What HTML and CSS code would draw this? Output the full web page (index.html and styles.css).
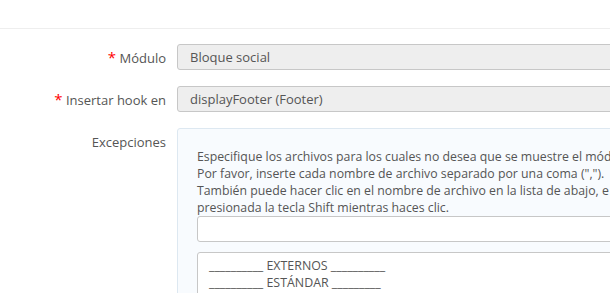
FILE: index.html
```html
<!DOCTYPE html>
<html lang="es">
<head>
  <meta charset="UTF-8" />
  <title>Transplantar un módulo</title>
  <link rel="stylesheet" href="styles.css">
</head>
<body>
  <div class="panel">
    <div class="panel-body">
      <div class="form-group">
        <label class="control-label"><span class="required">*</span> Módulo</label>
        <div class="field">
          <div class="form-control readonly">Bloque social</div>
        </div>
      </div>
      <div class="form-group">
        <label class="control-label"><span class="required">*</span> Insertar hook en</label>
        <div class="field">
          <div class="form-control readonly">displayFooter (Footer)</div>
        </div>
      </div>
      <div class="form-group top">
        <label class="control-label">Excepciones</label>
        <div class="field">
          <div class="well">
            <p class="help">Especifique los archivos para los cuales no desea que se muestre el módulo.<br>
            Por favor, inserte cada nombre de archivo separado por una coma (",").<br>
            También puede hacer clic en el nombre de archivo en la lista de abajo, e incluso hacer una selección múltiple manteniendo<br>
            presionada la tecla Shift mientras haces clic.</p>
            <input type="text" class="form-control input" value="">
            <div class="file-list">
              <div class="opt">__________ EXTERNOS __________</div>
              <div class="opt">__________ ESTÁNDAR _________</div>
              <div class="opt">address</div>
            </div>
          </div>
        </div>
      </div>
    </div>
  </div>
</body>
</html>
```

FILE: styles.css
```css
html, body { margin: 0; padding: 0; background: #fff; overflow: hidden; }
body { font-family: "Open Sans", "Liberation Sans", sans-serif; font-size: 13px; color: #555; width: 610px; height: 293px; }
.panel { width: 900px; padding-top: 28px; }
.panel-body { border-top: 1px solid #eeeeee; padding-top: 15px; }
.form-group { display: flex; align-items: center; margin-bottom: 16px; }
.form-group.top { align-items: flex-start; }
.control-label { width: 166px; padding-right: 11px; text-align: right; line-height: 18px; flex: none; }
.form-group.top .control-label { padding-top: 5px; }
.required { color: #f00; font-size: 15px; }
.field { flex: 1; }
.form-control { box-sizing: border-box; height: 26px; line-height: 24px; padding: 0 12px; border: 1px solid #c7c7c7; border-radius: 3px; color: #555; font-family: inherit; font-size: 13px; }
.readonly { background: #eeeeee; }
.well { background: #f8fbfe; border: 1px solid #dde8f1; border-radius: 3px; padding: 19px 19px 20px; height: 300px; }
.help { margin: 0; font-size: 12.3px; line-height: 17px; white-space: nowrap; color: #555; }
.input { display: block; width: 100%; height: 26px; background: #fff; outline: none; }
.file-list { margin-top: 10px; background: #fff; border: 1px solid #c7c7c7; border-radius: 3px; padding: 4px 11px; font-size: 12.4px; line-height: 17px; height: 120px; }
.opt { white-space: nowrap; }
```
